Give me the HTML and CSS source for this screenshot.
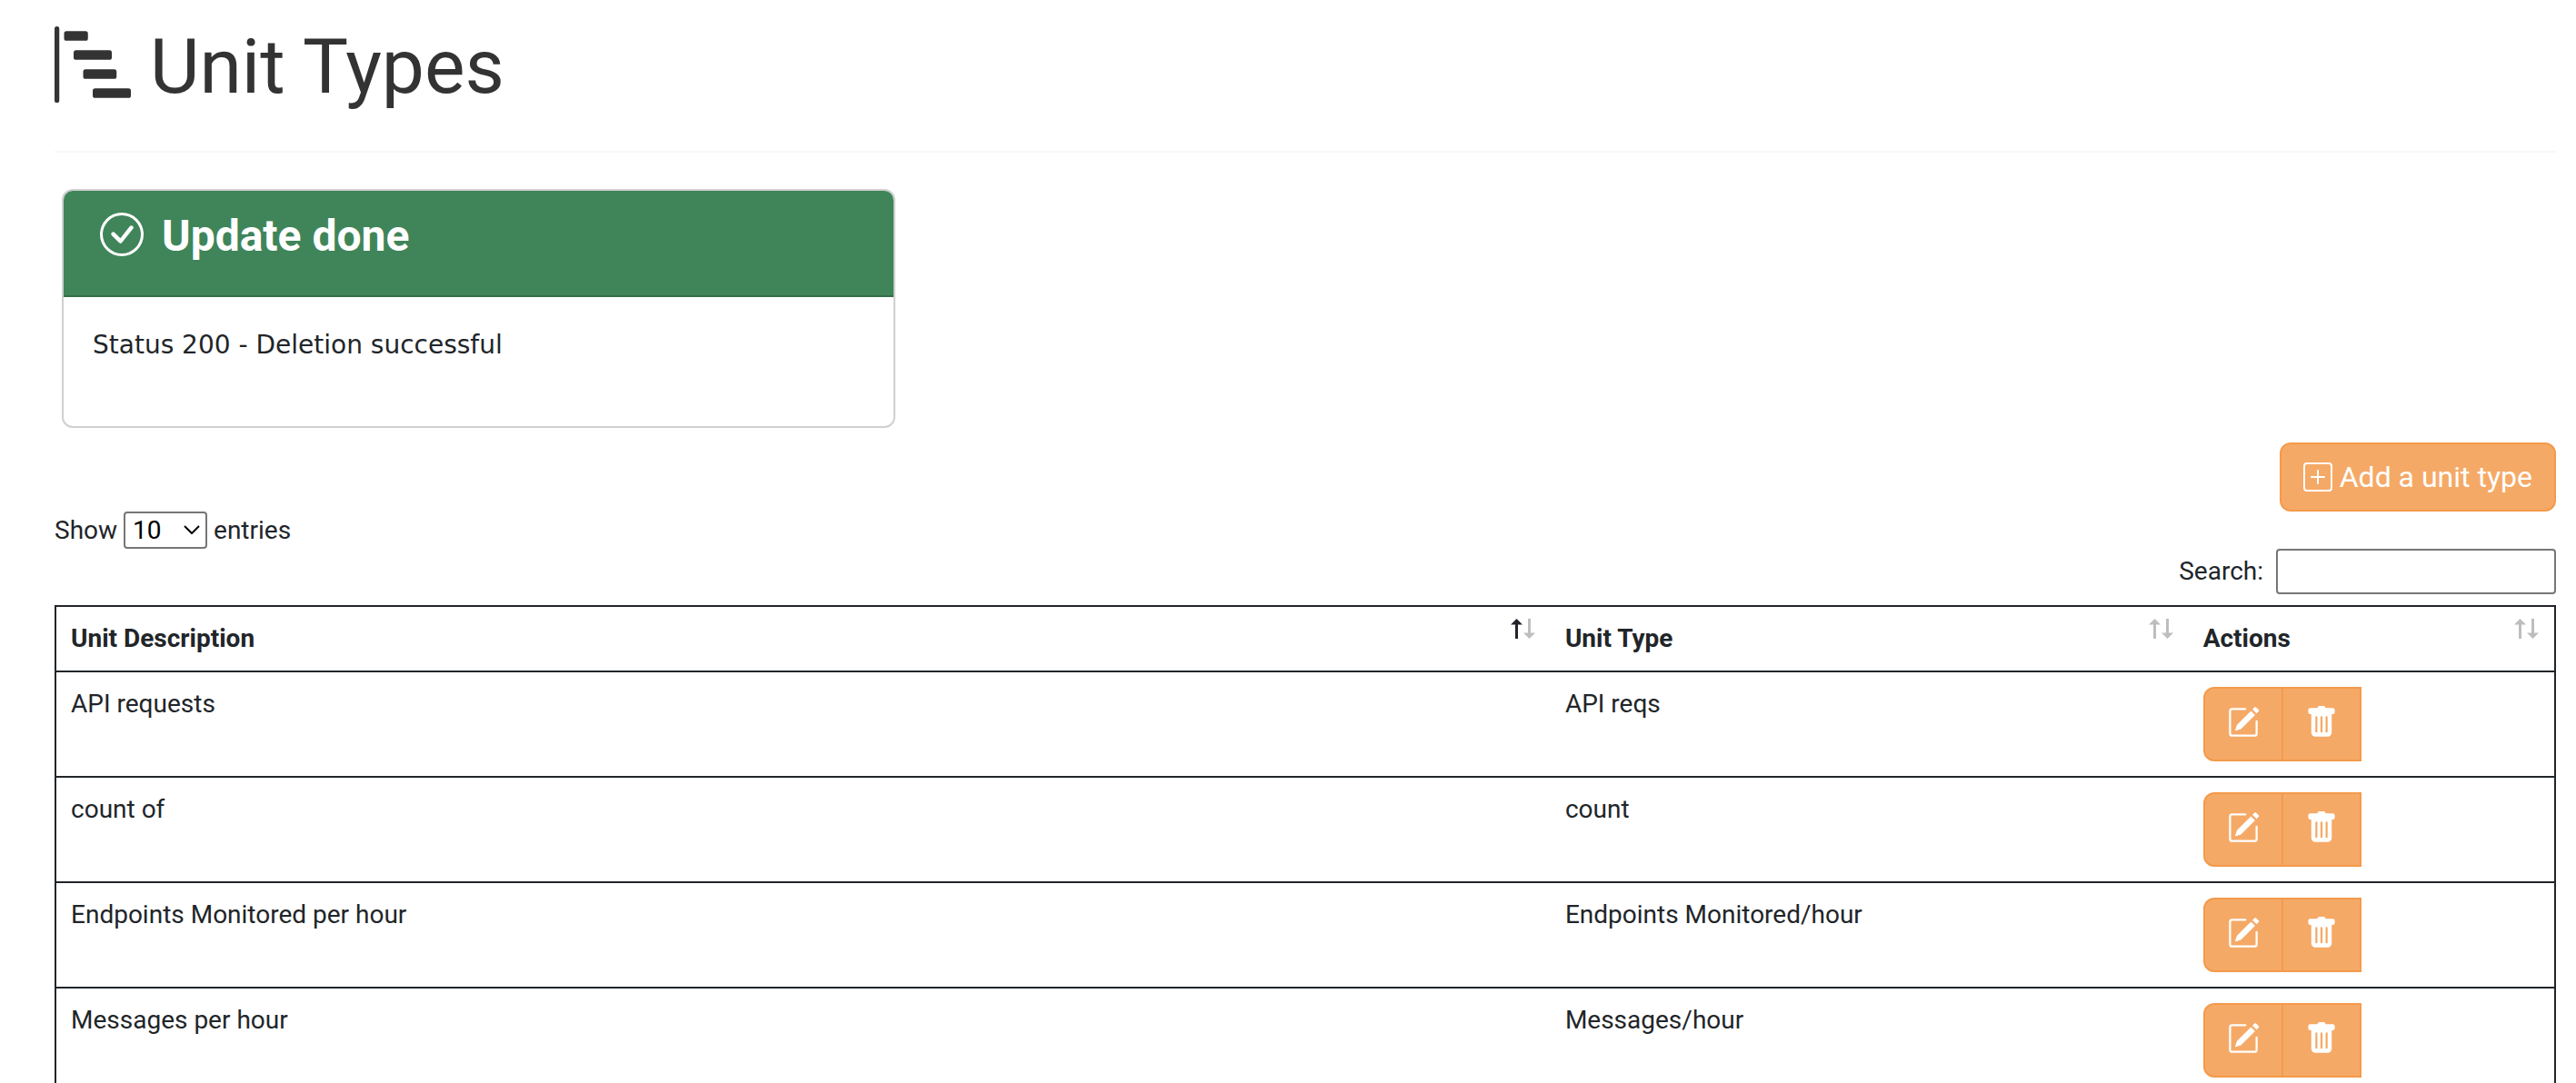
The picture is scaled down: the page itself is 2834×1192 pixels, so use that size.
FILE: index.html
```html
<!DOCTYPE html>
<html lang="en">
<head>
<meta charset="utf-8">
<title>Unit Types</title>
<link rel="stylesheet" href="styles.css">
</head>
<body>
<svg class="sprite" aria-hidden="true">
  <symbol id="pencil-square" viewBox="0 0 16 16">
    <path d="M15.502 1.94a.5.5 0 0 1 0 .706L14.459 3.69l-2-2L13.502.646a.5.5 0 0 1 .707 0l1.293 1.293zm-1.75 2.456-2-2L4.939 9.21a.5.5 0 0 0-.121.196l-.805 2.414a.25.25 0 0 0 .316.316l2.414-.805a.5.5 0 0 0 .196-.12l6.813-6.814z"/>
    <path fill-rule="evenodd" d="M1 13.5A1.5 1.5 0 0 0 2.5 15h11a1.5 1.5 0 0 0 1.5-1.5v-6a.5.5 0 0 0-1 0v6a.5.5 0 0 1-.5.5h-11a.5.5 0 0 1-.5-.5v-11a.5.5 0 0 1 .5-.5H9a.5.5 0 0 0 0-1H2.5A1.5 1.5 0 0 0 1 2.5v11z"/>
  </symbol>
  <symbol id="trash-fill" viewBox="0 0 16 16">
    <path d="M2.5 1a1 1 0 0 0-1 1v1a1 1 0 0 0 1 1H3v9a2 2 0 0 0 2 2h6a2 2 0 0 0 2-2V4h.5a1 1 0 0 0 1-1V2a1 1 0 0 0-1-1H10a1 1 0 0 0-1-1H7a1 1 0 0 0-1 1H2.5zm3 4a.5.5 0 0 1 .5.5v7a.5.5 0 0 1-1 0v-7a.5.5 0 0 1 .5-.5zM8 5a.5.5 0 0 1 .5.5v7a.5.5 0 0 1-1 0v-7A.5.5 0 0 1 8 5zm3 .5v7a.5.5 0 0 1-1 0v-7a.5.5 0 0 1 1 0z"/>
  </symbol>
  <symbol id="arrow-up" viewBox="0 0 13 22">
    <path d="M6.5 0 13 6.5H8V22H5V6.5H0z"/>
  </symbol>
  <symbol id="arrow-down" viewBox="0 0 13 22">
    <path d="M6.5 22 0 15.5H5V0H8V15.5H13z"/>
  </symbol>
</svg>
<main class="page">
  <h1 class="page-title">
    <svg class="page-title-icon" viewBox="0 0 16 16" aria-hidden="true">
      <path d="M.5 0a.5.5 0 0 1 .5.5v15a.5.5 0 0 1-1 0V.5A.5.5 0 0 1 .5 0zM2 1.5a.5.5 0 0 1 .5-.5h4a.5.5 0 0 1 .5.5v1a.5.5 0 0 1-.5.5h-4a.5.5 0 0 1-.5-.5v-1zm2 4a.5.5 0 0 1 .5-.5h7a.5.5 0 0 1 .5.5v1a.5.5 0 0 1-.5.5h-7a.5.5 0 0 1-.5-.5v-1zm2 4a.5.5 0 0 1 .5-.5h6a.5.5 0 0 1 .5.5v1a.5.5 0 0 1-.5.5h-6a.5.5 0 0 1-.5-.5v-1zm2 4a.5.5 0 0 1 .5-.5h7a.5.5 0 0 1 .5.5v1a.5.5 0 0 1-.5.5h-7a.5.5 0 0 1-.5-.5v-1z"/>
    </svg>
    <span>Unit Types</span>
  </h1>
  <hr class="divider">

  <section class="card">
    <h2 class="card-header">
      <svg class="card-icon" viewBox="0 0 16 16" aria-hidden="true">
        <path d="M8 15A7 7 0 1 1 8 1a7 7 0 0 1 0 14zm0 1A8 8 0 1 0 8 0a8 8 0 0 0 0 16z"/>
        <path d="M10.97 4.97a.235.235 0 0 0-.02.022L7.477 9.417 5.384 7.323a.75.75 0 0 0-1.06 1.06L6.97 11.03a.75.75 0 0 0 1.079-.02l3.992-4.99a.75.75 0 0 0-1.071-1.05z"/>
      </svg>
      <span>Update done</span>
    </h2>
    <p class="card-body">Status 200 - Deletion successful</p>
  </section>

  <div class="toolbar">
    <button class="btn btn-add" type="button">
      <svg class="btn-add-icon" viewBox="0 0 16 16" aria-hidden="true">
        <path d="M14 1a1 1 0 0 1 1 1v12a1 1 0 0 1-1 1H2a1 1 0 0 1-1-1V2a1 1 0 0 1 1-1h12zM2 0a2 2 0 0 0-2 2v12a2 2 0 0 0 2 2h12a2 2 0 0 0 2-2V2a2 2 0 0 0-2-2H2z"/>
        <path d="M8 4a.5.5 0 0 1 .5.5v3h3a.5.5 0 0 1 0 1h-3v3a.5.5 0 0 1-1 0v-3h-3a.5.5 0 0 1 0-1h3v-3A.5.5 0 0 1 8 4z"/>
      </svg>
      <span>Add a unit type</span>
    </button>
  </div>

  <div class="length">
    <label for="page-length">Show</label>
    <span class="select-wrap">
      <select class="select" id="page-length">
        <option>10</option>
        <option>25</option>
        <option>50</option>
        <option>100</option>
      </select>
      <svg class="select-arrow" viewBox="0 0 18 10" aria-hidden="true"><path d="M1 1l8 8 8-8"/></svg>
    </span>
    <span>entries</span>
  </div>
  <div class="filter">
    <label for="search">Search:</label>
    <input class="search" id="search" type="search">
  </div>

  <table class="table">
    <colgroup><col><col class="col-type"><col class="col-actions"></colgroup>
    <thead>
      <tr>
        <th scope="col" aria-sort="ascending"><button class="sort" type="button"><span class="sort-label">Unit Description</span><span class="arrows"><svg class="arrow arrow-active"><use href="#arrow-up"/></svg><svg class="arrow"><use href="#arrow-down"/></svg></span></button></th>
        <th scope="col"><button class="sort" type="button"><span class="sort-label">Unit Type</span><span class="arrows"><svg class="arrow"><use href="#arrow-up"/></svg><svg class="arrow"><use href="#arrow-down"/></svg></span></button></th>
        <th scope="col"><button class="sort" type="button"><span class="sort-label">Actions</span><span class="arrows"><svg class="arrow"><use href="#arrow-up"/></svg><svg class="arrow"><use href="#arrow-down"/></svg></span></button></th>
      </tr>
    </thead>
    <tbody>
      <tr>
        <td>API requests</td>
        <td>API reqs</td>
        <td><div class="btn-group"><button class="btn btn-icon" type="button" aria-label="Edit"><svg class="icon"><use href="#pencil-square"/></svg></button><button class="btn btn-icon" type="button" aria-label="Delete"><svg class="icon"><use href="#trash-fill"/></svg></button></div></td>
      </tr>
      <tr>
        <td>count of</td>
        <td>count</td>
        <td><div class="btn-group"><button class="btn btn-icon" type="button" aria-label="Edit"><svg class="icon"><use href="#pencil-square"/></svg></button><button class="btn btn-icon" type="button" aria-label="Delete"><svg class="icon"><use href="#trash-fill"/></svg></button></div></td>
      </tr>
      <tr>
        <td>Endpoints Monitored per hour</td>
        <td>Endpoints Monitored/hour</td>
        <td><div class="btn-group"><button class="btn btn-icon" type="button" aria-label="Edit"><svg class="icon"><use href="#pencil-square"/></svg></button><button class="btn btn-icon" type="button" aria-label="Delete"><svg class="icon"><use href="#trash-fill"/></svg></button></div></td>
      </tr>
      <tr>
        <td>Messages per hour</td>
        <td>Messages/hour</td>
        <td><div class="btn-group"><button class="btn btn-icon" type="button" aria-label="Edit"><svg class="icon"><use href="#pencil-square"/></svg></button><button class="btn btn-icon" type="button" aria-label="Delete"><svg class="icon"><use href="#trash-fill"/></svg></button></div></td>
      </tr>
    </tbody>
  </table>
</main>
</body>
</html>
```
FILE: styles.css
```css
* {
  box-sizing: border-box;
}

html {
  scrollbar-width: none;
}

body {
  margin: 0;
  background: #fff;
  color: #212529;
  font: 400 28px/38px Roboto, "Liberation Sans", sans-serif;
}

svg {
  display: block;
  fill: currentColor;
}

button,
input,
select {
  font: inherit;
  color: inherit;
}

.sprite {
  display: none;
}

.page {
  padding: 29px 22px 0 60px;
}

.page-title {
  display: flex;
  gap: 21px;
  margin: 0;
  color: #333;
  font-size: 84px;
  font-weight: 400;
  line-height: 90px;
}

.page-title-icon {
  width: 84px;
  height: 84px;
}

.divider {
  height: 2px;
  margin: 47px 0 40px;
  border: 0;
  background: #f8f8f8;
}

/* Status message */
.card {
  width: 33.33%;
  margin: 0 0 16px 8px;
  border: 2px solid #d0d0d0;
  border-radius: 12px;
  overflow: hidden;
}

.card-header {
  display: flex;
  gap: 20px;
  margin: 0;
  padding: 24px 40px 39px;
  border-bottom: 2px solid #356f4a;
  background: #40855a;
  color: #fff;
  font-size: 48px;
  font-weight: 700;
  line-height: 52px;
}

.card-icon {
  width: 48px;
  height: 48px;
}

.card-body {
  margin: 0;
  padding: 32px 32px 68px;
  font-family: "DejaVu Sans", Verdana, sans-serif;
  line-height: 42px;
}

/* Buttons */
.btn {
  border: 2px solid #f49a4c;
  background: #f5a966;
  color: #fff;
  cursor: pointer;
}

.btn-add {
  display: flex;
  align-items: center;
  gap: 8px;
  padding: 17px 24px;
  border-radius: 12px;
  font-size: 32px;
}

.btn-add-icon {
  width: 32px;
  height: 32px;
}

.btn-group {
  display: flex;
}

.btn-icon {
  padding: 19px 24px 23px;
}

.btn-icon:first-child {
  border-radius: 12px 0 0 12px;
}

.btn-icon + .btn-icon {
  margin-left: -2px;
}

.icon {
  width: 36px;
  height: 36px;
}

/* Table controls */
.toolbar,
.filter {
  display: flex;
  justify-content: flex-end;
}

.length {
  display: flex;
  align-items: center;
  gap: 7px;
}

.select-wrap {
  position: relative;
}

.select {
  display: block;
  width: 92px;
  height: 41px;
  padding: 0 8px;
  border: 2px solid #767676;
  border-radius: 4px;
  background: #fff;
  color: #000;
  appearance: none;
}

.select-arrow {
  position: absolute;
  top: 15px;
  right: 8px;
  width: 18px;
  height: 10px;
  fill: none;
  stroke: #000;
  stroke-width: 2;
  pointer-events: none;
}

.filter {
  align-items: center;
  gap: 14px;
  margin-bottom: 12px;
}

.search {
  width: 308px;
  height: 50px;
  padding: 0 8px;
  border: 2px solid #767676;
  border-radius: 4px;
  background: #fff;
  appearance: none;
}

/* Data table */
.table {
  width: 100%;
  border: 2px solid #212529;
  border-spacing: 0;
  table-layout: fixed;
}

.col-type {
  width: 25.54%;
}

.col-actions {
  width: 14.64%;
}

.table th {
  padding: 12px 17px 12px 16px;
}

.table td {
  padding: 16px;
  border-top: 2px solid #212529;
  vertical-align: top;
}

.sort {
  display: flex;
  justify-content: space-between;
  align-items: flex-start;
  width: 100%;
  padding: 0;
  border: 0;
  background: none;
  font-weight: 700;
  text-align: left;
  cursor: pointer;
}

.sort-label {
  padding: 4px 0;
}

.arrows {
  display: flex;
  gap: 1px;
  padding-top: 1px;
}

.arrow {
  width: 13px;
  height: 22px;
  color: #bdbebf;
}

.arrow-active {
  color: #212529;
}
```
